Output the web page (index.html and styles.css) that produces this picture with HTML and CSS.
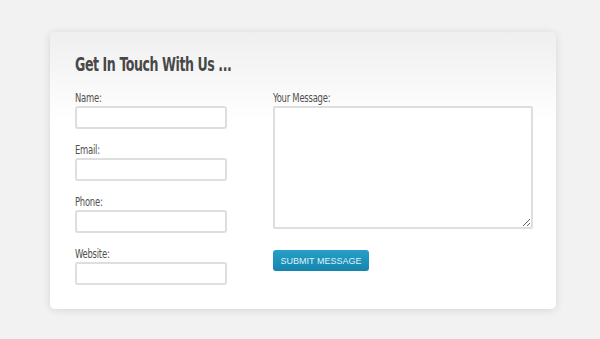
FILE: index.html
```html
<!DOCTYPE html>
<html lang="en">
<head>
  <meta charset="UTF-8">
  <meta name="viewport" content="width=device-width, initial-scale=1.0">
  <title>Contact</title>
  <link rel="stylesheet" href="styles.css">
</head>
<body>
  <section class="card">
    <h1>Get In Touch With Us ...</h1>
    <form class="contact">
      <div class="col">
        <label><span>Name:</span><input type="text"></label>
        <label><span>Email:</span><input type="text"></label>
        <label><span>Phone:</span><input type="text"></label>
        <label><span>Website:</span><input type="text"></label>
      </div>
      <div class="col">
        <label><span>Your Message:</span><textarea></textarea></label>
        <button type="button">SUBMIT MESSAGE</button>
      </div>
    </form>
  </section>
</body>
</html>
```

FILE: styles.css
```css
* {
  margin: 0;
  padding: 0;
  box-sizing: border-box;
}
body {
  background: #f2f2f2;
  padding: 32px 44px 30px 50px;
  font-family: "DejaVu Sans Condensed", "DejaVu Sans", sans-serif;
}
.card {
  width: 506px;
  height: 277px;
  background: linear-gradient(#efefef, #ffffff 90px);
  border-radius: 5px;
  box-shadow: 0 1px 8px rgba(0,0,0,.12);
  padding: 20px 25px;
}
h1 {
  font-size: 20px;
  font-weight: bold;
  color: #484848;
  letter-spacing: -0.6px;
  transform: scaleX(.7);
  transform-origin: left;
  margin-bottom: 15px;
}
.contact {
  display: grid;
  grid-template-columns: 152px 260px;
  gap: 46px;
}
.col {
  display: flex;
  flex-direction: column;
  gap: 14px;
}
label {
  display: flex;
  flex-direction: column;
  font-size: 12px;
  color: #505050;
  gap: 1px;
}
label span {
  transform: scaleX(.78);
  transform-origin: left;
  letter-spacing: -0.3px;
}
input, textarea {
  border: 2px solid #dedede;
  border-radius: 3px;
  background: #fff;
  height: 23px;
}
textarea {
  height: 123px;
  border-radius: 2px;
  resize: vertical;
}
button {
  align-self: flex-start;
  margin-top: 7px;
  width: 96px;
  height: 21px;
  border: none;
  border-radius: 3px;
  background: linear-gradient(#279fc8, #1584ad);
  color: #dff2fa;
  font-family: "Liberation Sans", Arial, sans-serif;
  font-size: 9px;
}
```
